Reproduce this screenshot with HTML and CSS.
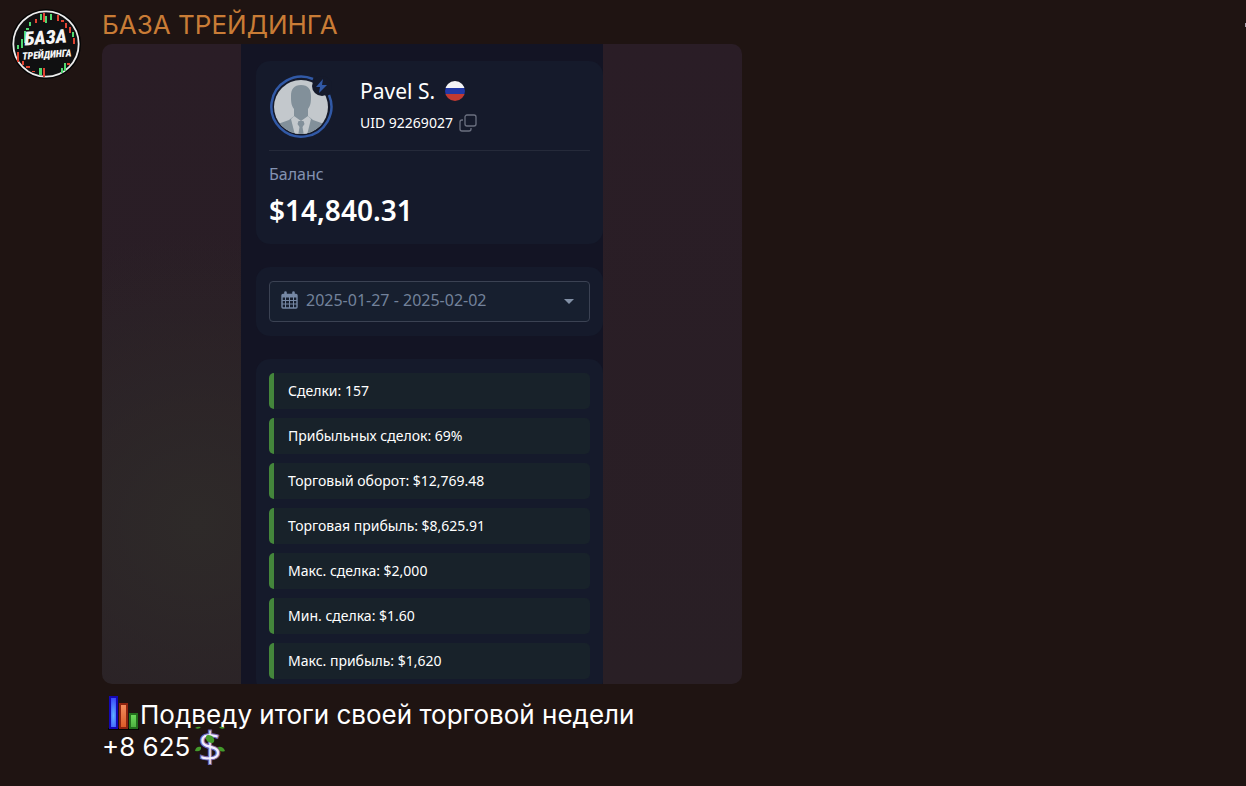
FILE: index.html
```html
<!DOCTYPE html>
<html lang="ru">

<head>
  <meta charset="UTF-8">
  <meta name="viewport" content="width=device-width, initial-scale=1.0">
  <title>База трейдинга</title>
  <link rel="stylesheet" href="styles.css">
</head>

<body>
  <div class="message">
    <svg class="channel_logo" viewBox="0 0 70 70" role="img" aria-label="База трейдинга">
      <circle cx="35" cy="35" r="35" fill="#050505" />
      <circle cx="35" cy="35" r="32.7" fill="#101011" stroke="#ececec" stroke-width="1.8" />
      <g fill="#50d870">
        <path d="M10 30h2v9h-2zM13 22h2v12h-2zM6 36h2v4h-2zM18 13h2v4h-2zM29 5h2v6h-2zM34 7h2v7h-2zM39 5h2v6h-2zM28 59h3v7h-3zM50 59h2v5h-2zM53 54h2v8h-2zM61 23h2v5h-2zM15 19h3v2h-3z" />
      </g>
      <g fill="#e04432">
        <path d="M24 10h2v4h-2zM32 4h2v9h-2zM46 6h2v6h-2zM50 11h3v2h-3zM54 14h2v5h-2zM58 18h2v6h-2zM62 29h2v6h-2zM6 43h2v10h-2zM11 52h2v4h-2zM15 57h4v2h-4zM32 59h2v9h-2zM56 54h3v2h-3zM21 62h3v1h-3z" />
      </g>
      <g transform="rotate(-4 35 35)" fill="#f5f5f5" text-anchor="middle">
        <text class="logo_big" x="35" y="35">БАЗА</text>
        <text class="logo_small" x="35" y="49">ТРЕЙДИНГА</text>
      </g>
    </svg>

    <div class="content">
      <div class="header">
        <h1 class="channel">БАЗА ТРЕЙДИНГА</h1>
        <span class="mark"></span>
      </div>

      <div class="photo">
        <div class="phone">
          <div class="panel">
            <div class="user">
              <svg class="user_pic" viewBox="0 0 64 64" aria-hidden="true">
                <defs>
                  <clipPath id="face">
                    <circle cx="32" cy="32" r="27" />
                  </clipPath>
                </defs>
                <g clip-path="url(#face)">
                  <path d="M0 0h64v64H0z" fill="#c3c8cc" />
                  <path d="M32 10c-7 0-10 4-10 11 0 5 0 9 3 13v7l-5 4-14 5v14h52V50l-14-5-5-4v-7c3-4 3-8 3-13 0-7-3-11-10-11z" fill="#82909a" />
                  <path d="M25 41l-3 3 5 20h10l5-20-3-3-7 5z" fill="#c3c8cc" />
                  <path d="M29.500 46h5l1 3-2 3 2 12h-7l2-12-2-3z" fill="#82909a" />
                </g>
                <circle cx="53" cy="11" r="10" fill="#151a2b" />
                <path d="M44 4A30 30 0 1 0 60 20" fill="none" stroke="#3159a6" stroke-width="2.500" />
                <path d="M54 4l-7 8h4l-1 6 8-8h-5z" fill="#3159a6" />
              </svg>
              <div class="user_info">
                <div class="name">Pavel S.
                  <svg class="flag" viewBox="0 0 20 20" role="img" aria-label="Россия">
                    <clipPath id="round">
                      <circle cx="10" cy="10" r="10" />
                    </clipPath>
                    <g clip-path="url(#round)">
                      <path d="M0 0h20v7H0z" fill="#f4f4f6" />
                      <path d="M0 7h20v6H0z" fill="#2338a5" />
                      <path d="M0 13h20v7H0z" fill="#c13a32" />
                    </g>
                  </svg>
                </div>
                <div class="uid">UID 92269027
                  <button class="copy" type="button" aria-label="Скопировать UID">
                    <svg viewBox="0 0 18 18" fill="none" stroke="#6b7080" stroke-width="1.300">
                      <rect x="6" y="1" width="11" height="11" rx="2" />
                      <path d="M4 6H3a2 2 0 0 0-2 2v7a2 2 0 0 0 2 2h7a2 2 0 0 0 2-2v-1" />
                    </svg>
                  </button>
                </div>
              </div>
            </div>
            <div class="balance_label">Баланс</div>
            <div class="balance">$14,840.31</div>
          </div>

          <div class="panel">
            <div class="period">
              <svg class="calendar" viewBox="0 0 17 18" fill="none" stroke="#7688a5" aria-hidden="true">
                <rect x="1" y="3.500" width="15" height="13.500" rx="1" stroke-width="1.400" />
                <path d="M1 5h15" stroke-width="3" />
                <path d="M1 9.500h15M1 13h15M4.500 6v11M8.500 6v11M12.500 6v11" />
                <path d="M4.500 1.500v3M12.500 1.500v3" stroke-width="2.600" stroke-linecap="round" />
              </svg>
              <select class="range" aria-label="Период">
                <option>2025-01-27 - 2025-02-02</option>
              </select>
              <svg class="caret" viewBox="0 0 10 5" aria-hidden="true">
                <path d="M0 0h10L5 5z" fill="#8290a6" />
              </svg>
            </div>
          </div>

          <div class="panel">
            <ul class="stats">
              <li>Сделки: 157</li>
              <li>Прибыльных сделок: 69%</li>
              <li>Торговый оборот: $12,769.48</li>
              <li>Торговая прибыль: $8,625.91</li>
              <li>Макс. сделка: $2,000</li>
              <li>Мин. сделка: $1.60</li>
              <li>Макс. прибыль: $1,620</li>
            </ul>
          </div>
        </div>
      </div>

      <p class="text">
        <svg class="emoji_chart" viewBox="0 0 38 34" role="img" aria-label="график">
          <defs>
            <radialGradient id="blue" cy=".6" r=".6">
              <stop offset="0" stop-color="#5eb4ff" />
              <stop offset="1" stop-color="#3a49fa" />
            </radialGradient>
            <linearGradient id="orange" x2="0" y2="1">
              <stop offset="0" stop-color="#f58e5e" />
              <stop offset="1" stop-color="#dc5a26" />
            </linearGradient>
            <linearGradient id="green" x2="0" y2="1">
              <stop offset="0" stop-color="#6edc5c" />
              <stop offset="1" stop-color="#4cae40" />
            </linearGradient>
          </defs>
          <path d="M6 33h31" stroke="#050303" stroke-width="2" />
          <path d="M8 1h7v31H8z" fill="url(#blue)" stroke="#1508b4" stroke-width="2" />
          <path d="M18 8h7v24h-7z" fill="url(#orange)" stroke="#8e2410" stroke-width="2" />
          <path d="M28 18h7v14h-7z" fill="url(#green)" stroke="#23701d" stroke-width="2" />
        </svg>Подведу итоги своей торговой недели<br>+8 625
        <svg class="emoji_dollar" viewBox="0 0 32 40" role="img" aria-label="доллар">
          <text class="dollar" x="16" y="35" text-anchor="middle">$</text>
          <g fill="#439a2b">
            <path d="M1 1q3-2 6-1-2 3-6 1zM25 0q3-1 6 1-4 2-6-1z" />
            <path d="M1 24q1-5 6-4 1 5-6 4zM24 20q5-1 7 4-6 2-7-4z" />
            <path d="M12 12q-1-6 6-3 4 4 1 7-6 0-7-4z" />
          </g>
        </svg>
      </p>
    </div>
  </div>
</body>

</html>
```

FILE: styles.css
```css
* {
  box-sizing: border-box;
}

body {
  margin: 0;
  background-color: #1f1412;
  color: white;
  font-family: "Inter", "Liberation Sans", sans-serif;
}

.message {
  display: flex;
  gap: 21px;
  padding: 9px 0 20px 11px;
}

.channel_logo {
  width: 70px;
  height: 70px;
  flex-shrink: 0;
}

.logo_big,
.logo_small {
  font-family: "Roboto Condensed", "Roboto", sans-serif;
  font-weight: 900;
  font-style: italic;
}

.logo_big {
  font-size: 19px;
}

.logo_small {
  font-size: 10px;
}

.content {
  flex: 1;
  min-width: 0;
}

.header {
  display: flex;
  justify-content: space-between;
  align-items: center;
  height: 31px;
  margin-bottom: 4px;
}

.channel {
  margin: 0;
  color: #c97c36;
  font-size: 26px;
  font-weight: normal;
  line-height: 32px;
}

.mark {
  width: 1px;
  height: 4px;
  background-color: #a8a0ac;
}

.photo {
  display: flex;
  justify-content: center;
  width: 100%;
  max-width: 640px;
  aspect-ratio: 1;
  border-radius: 10px;
  overflow: hidden;
  background: radial-gradient(circle at 15% 75%, #2e2a29, transparent 40%), linear-gradient(#2a1d26, #291f25);
}

.phone {
  display: flex;
  flex-direction: column;
  gap: 23px;
  width: 362px;
  padding: 17px 0 0 15px;
  background-color: #131424;
  font-family: "Noto Sans", sans-serif;
}

.panel {
  padding: 14px 13px;
  border-radius: 14px;
  background-color: #151a2b;
}

.user {
  display: flex;
  gap: 27px;
  padding-bottom: 11px;
  border-bottom: 1px solid #252a3a;
}

.user_pic {
  width: 64px;
  height: 64px;
}

.name {
  display: flex;
  align-items: center;
  gap: 10px;
  font-size: 21px;
  line-height: 32px;
}

.flag {
  width: 20px;
  height: 20px;
}

.uid {
  display: flex;
  align-items: center;
  gap: 6px;
  font-size: 14px;
  line-height: 32px;
}

.copy {
  width: 18px;
  height: 18px;
  padding: 0;
  border: none;
  background: none;
}

.copy svg {
  display: block;
}

.balance_label {
  margin-top: 11px;
  color: #8392b2;
  font-size: 16px;
  line-height: 24px;
}

.balance {
  padding-top: 4px;
  font-size: 28px;
  font-weight: 600;
  line-height: 40px;
}

.period {
  display: flex;
  align-items: center;
  position: relative;
  height: 41px;
}

.range {
  width: 100%;
  height: 100%;
  padding: 0 36px 3px;
  border: 1px solid #3b4253;
  border-radius: 4px;
  appearance: none;
  background-color: #171f2f;
  color: #73829b;
  font-family: inherit;
  font-size: 16px;
}

/* icons lie over the select */
.calendar,
.caret {
  position: absolute;
  pointer-events: none;
}

.calendar {
  top: 10px;
  left: 12px;
  width: 17px;
  height: 18px;
}

.caret {
  right: 16px;
  width: 10px;
  height: 5px;
}

.stats {
  display: flex;
  flex-direction: column;
  gap: 9px;
  margin: 0;
  padding: 0;
  list-style: none;
}

.stats li {
  padding-left: 14px;
  border-left: 5px solid #44863b;
  border-radius: 5px;
  background-color: #18222a;
  font-size: 14px;
  line-height: 36px;
}

.text {
  margin: 15px 0 0;
  font-size: 26px;
  line-height: 32px;
}

/* negative margins keep both lines 32px high */
.emoji_chart {
  width: 38px;
  height: 34px;
  margin: -6px 0;
  vertical-align: 0;
}

.emoji_dollar {
  width: 32px;
  height: 40px;
  margin: -10px 0 -10px -4px;
  vertical-align: -1px;
  overflow: visible;
}

.dollar {
  font-family: "Noto Sans", sans-serif;
  font-size: 42px;
  fill: #f2edff;
  stroke: #7467b4;
  stroke-width: 1px;
}
```
